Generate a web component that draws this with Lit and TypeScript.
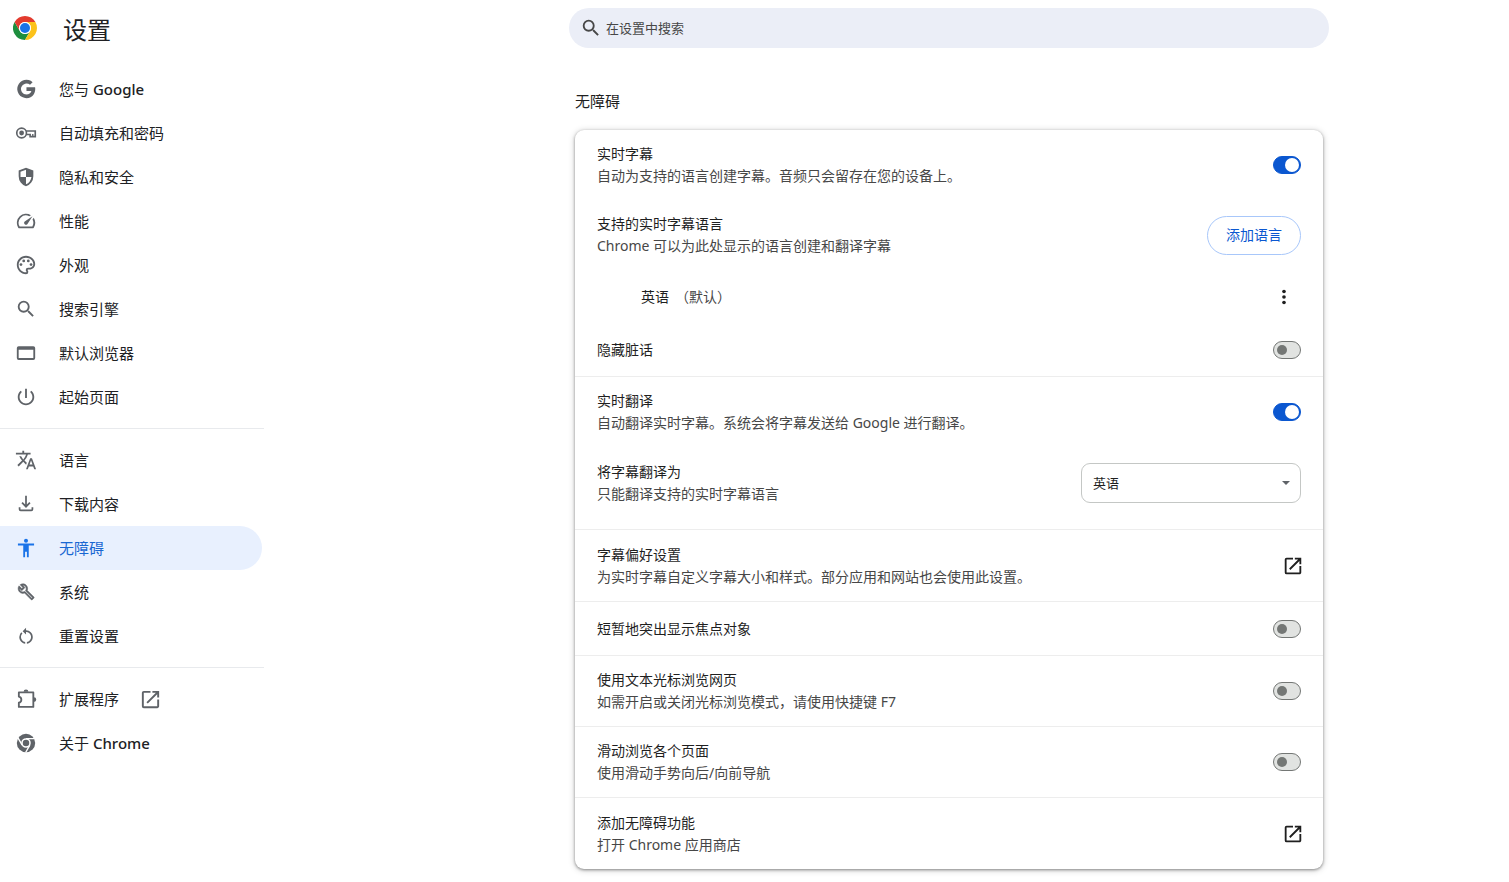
import { LitElement, html, css, svg, nothing } from "lit";
import { customElement, property } from "lit/decorators.js";

const ICONS: Record<string, unknown> = {
  google: svg`<path d="M12.5 10.2v3.9h5.4c-.7 2.3-2.6 3.9-5.4 3.9a6 6 0 1 1 3.9-10.6l2.8-2.8A10 10 0 1 0 12.5 22c8.4 0 10.2-7.8 9.4-11.8z"/>`,
  key: svg`<g fill="none" stroke="currentColor" stroke-width="1.8"><circle cx="7.2" cy="12" r="5.300"/><path d="M12.200 9.800h9.900v6.200h-5.600v-2.400h-4.300"/><path stroke-width="1.500" d="M19.400 16v-3"/></g><circle cx="7.2" cy="12" r="2.600"/>`,
  shield: svg`<path transform="scale(.025) translate(0 960)" d="M480-80q-139-35-229.500-159.500T160-516v-244l320-120 320 120v244q0 152-90.500 276.500T480-80Zm0-84q97-30 162-118.500T718-480H480v-315l-240 90v207q0 7 2 18h238v316Z"/>`,
  speed: svg`<path d="m20.380 8.570-1.230 1.850a8 8 0 0 1-.22 7.580H5.070A8 8 0 0 1 15.580 6.850l1.850-1.230A10 10 0 0 0 3.350 19a2 2 0 0 0 1.720 1h13.850a2 2 0 0 0 1.740-1 10 10 0 0 0-.27-10.440zm-9.790 6.840a2 2 0 0 0 2.830 0l5.660-8.490-8.490 5.660a2 2 0 0 0 0 2.830z"/>`,
  palette: svg`<path d="M12 22C6.490 22 2 17.510 2 12S6.490 2 12 2s10 4.040 10 9c0 3.310-2.690 6-6 6h-1.770c-.28 0-.5.22-.5.5 0 .12.050.23.13.33.41.47.64 1.060.64 1.670A2.500 2.500 0 0 1 12 22zm0-18c-4.410 0-8 3.590-8 8s3.590 8 8 8c.28 0 .5-.22.5-.5a.54.54 0 0 0-.14-.35c-.41-.46-.63-1.050-.63-1.650a2.500 2.500 0 0 1 2.500-2.500H16c2.210 0 4-1.790 4-4 0-3.860-3.590-7-8-7z"/><circle cx="6.5" cy="11.5" r="1.500"/><circle cx="9.5" cy="7.5" r="1.500"/><circle cx="14.5" cy="7.5" r="1.500"/><circle cx="17.5" cy="11.5" r="1.500"/>`,
  search: svg`<path d="M15.500 14h-.79l-.28-.27A6.471 6.471 0 0 0 16 9.500 6.500 6.500 0 1 0 9.500 16c1.610 0 3.090-.59 4.230-1.570l.27.28v.79l5 4.990L20.490 19l-4.990-5zm-6 0C7.010 14 5 11.990 5 9.500S7.010 5 9.500 5 14 7.010 14 9.500 11.990 14 9.500 14z"/>`,
  browser: svg`<path d="M20 4.500H4a2 2 0 0 0-2 2v11a2 2 0 0 0 2 2h16a2 2 0 0 0 2-2v-11a2 2 0 0 0-2-2zm0 13H4V8.500h16z"/>`,
  power: svg`<path d="M13 3h-2v10h2V3zm4.830 2.170l-1.420 1.420C17.990 7.860 19 9.810 19 12c0 3.870-3.130 7-7 7s-7-3.130-7-7c0-2.190 1.010-4.140 2.580-5.420L6.170 5.170C4.230 6.820 3 9.260 3 12c0 4.970 4.030 9 9 9s9-4.030 9-9c0-2.740-1.230-5.180-3.170-6.830z"/>`,
  translate: svg`<path d="M12.870 15.070l-2.540-2.510.03-.03A17.520 17.520 0 0 0 14.070 6H17V4h-7V2H8v2H1v1.990h11.170C11.500 7.920 10.440 9.750 9 11.350 8.070 10.320 7.300 9.190 6.690 8h-2c.73 1.630 1.730 3.170 2.980 4.560l-5.090 5.020L4 19l5-5 3.110 3.110.76-2.040zM18.500 10h-2L12 22h2l1.120-3h4.750L21 22h2l-4.500-12zm-2.620 7l1.620-4.330L19.120 17h-3.240z"/>`,
  download: svg`<g fill="none" stroke="currentColor" stroke-width="1.900"><path d="M12 3v12M7.700 10.600l4.300 4.300 4.300-4.300"/><path d="M5 15.500v2.300q0 1.200 1.200 1.200h11.600q1.200 0 1.200-1.200v-2.300"/></g>`,
  person: svg`<circle cx="12" cy="4" r="2.200"/><path d="M20.800 9.200H15V22h-2v-6h-2v6H9V9.200H3.200V7.200h17.600z"/>`,
  wrench: svg`<path transform="translate(2.600 2.300) scale(.8)" stroke="currentColor" stroke-width=".7" d="M22.610 18.990l-9.080-9.080c.93-2.340.45-5.100-1.440-7C9.790.61 6.210.4 3.660 2.260L7.500 6.110 6.080 7.520 2.250 3.690C.39 6.230.6 9.820 2.900 12.110c1.860 1.860 4.570 2.350 6.890 1.480l9.110 9.110c.39.39 1.020.39 1.410 0l2.300-2.300c.4-.38.4-1.010 0-1.410zm-3 1.600l-9.460-9.460c-.61.45-1.290.72-2 .82-1.360.2-2.790-.21-3.830-1.250C3.370 9.760 2.930 8.500 3 7.260l3.090 3.090 4.240-4.240-3.090-3.090c1.240-.07 2.490.37 3.440 1.310 1.080 1.080 1.490 2.570 1.240 3.960-.12.71-.42 1.370-.88 1.960l9.450 9.450-.88.89z"/>`,
  reset: svg`<path transform="translate(1 1.200) scale(.92)" d="M12 5V2L8 6l4 4V7c3.310 0 6 2.690 6 6 0 2.970-2.170 5.430-5 5.910v2.020c3.950-.49 7-3.850 7-7.930 0-4.420-3.580-8-8-8zm-6 8c0-1.650.67-3.150 1.760-4.240L6.340 7.340A8.014 8.014 0 0 0 4 13c0 4.080 3.050 7.440 7 7.930v-2.020c-2.830-.48-5-2.940-5-5.910z"/>`,
  puzzle: svg`<path fill="none" stroke="currentColor" stroke-width="2" stroke-linejoin="round" d="M4.200 4.800H20v15.800H4.200v-4.600a3.300 3.300 0 0 0 0-6.500z"/><path d="M9.400 4.200a2.600 2.600 0 0 1 5.200 0zM20.600 10a2.600 2.600 0 0 1 0 5.200z"/>`,
  launch: svg`<path d="M19 19H5V5h7V3H5a2 2 0 0 0-2 2v14a2 2 0 0 0 2 2h14c1.100 0 2-.9 2-2v-7h-2v7zM14 3v2h3.590l-9.830 9.830 1.410 1.410L19 6.410V10h2V3h-7z"/>`,
  chrome: svg`<g transform="translate(2 2) scale(.4167)"><circle cx="24" cy="24" r="24"/><path fill="none" stroke="#fff" stroke-width="3.600" d="M24 12.500H46M14 29.800L3 10.800M34 29.800L23 48.800"/><circle cx="24" cy="24" r="10.500" stroke="#fff" stroke-width="4"/></g>`,
  more: svg`<circle cx="12" cy="6" r="2"/><circle cx="12" cy="12" r="2"/><circle cx="12" cy="18" r="2"/>`,
};

const icon = (name: string, cls = "icon") =>
  html`<svg class=${cls} viewBox="0 0 24 24" fill="currentColor" aria-hidden="true">${ICONS[name]}</svg>`;

const shared = css`
  :host {
    font-family: "Noto Sans", "Noto Sans CJK SC", sans-serif;
  }
  *,
  *::before {
    box-sizing: border-box;
  }
  .icon {
    width: 22px;
    height: 22px;
    flex: none;
    display: block;
  }
`;

interface MenuItem {
  label: string;
  /** Latin product name that follows the label in a heavier weight. */
  product?: string;
  icon: string;
  active?: boolean;
  external?: boolean;
}

const MENU: MenuItem[][] = [
  [
    { label: "您与", product: "Google", icon: "google" },
    { label: "自动填充和密码", icon: "key" },
    { label: "隐私和安全", icon: "shield" },
    { label: "性能", icon: "speed" },
    { label: "外观", icon: "palette" },
    { label: "搜索引擎", icon: "search" },
    { label: "默认浏览器", icon: "browser" },
    { label: "起始页面", icon: "power" },
  ],
  [
    { label: "语言", icon: "translate" },
    { label: "下载内容", icon: "download" },
    { label: "无障碍", icon: "person", active: true },
    { label: "系统", icon: "wrench" },
    { label: "重置设置", icon: "reset" },
  ],
  [
    { label: "扩展程序", icon: "puzzle", external: true },
    { label: "关于", product: "Chrome", icon: "chrome" },
  ],
];

@customElement("settings-menu")
export class SettingsMenu extends LitElement {
  static styles = [
    shared,
    css`
      :host {
        display: block;
      }
      .brand {
        display: flex;
        align-items: flex-start;
        gap: 26px;
        padding: 14px 0 12px 13px;
      }
      .logo {
        width: 24px;
        height: 24px;
        flex: none;
        margin-top: 2px;
      }
      .name {
        margin: 0;
        font-size: 24px;
        line-height: 32px;
        font-weight: 400;
        color: #202124;
      }
      .menu {
        padding-top: 9px;
      }
      .group + .group {
        margin-top: 9px;
        padding-top: 9px;
        border-top: 1px solid #e8eaed;
      }
      .item {
        display: flex;
        align-items: center;
        height: 44px;
        margin-right: 2px;
        padding-left: 15px;
        border-radius: 0 22px 22px 0;
        font-size: 15px;
        line-height: 22px;
        color: #202124;
        text-decoration: none;
      }
      .item .icon {
        color: #5f6368;
      }
      .label {
        padding-left: 22px;
      }
      .product {
        font-weight: 500;
      }
      .item .external {
        width: 23px;
        height: 23px;
        margin-left: 20px;
        color: #5f6368;
      }
      .item.active {
        background: #e8f0fe;
        color: #1967d2;
      }
      .item.active .icon {
        color: #1a73e8;
      }
    `,
  ];

  render() {
    return html`
      <div class="brand">
        <svg class="logo" viewBox="0 0 48 48" aria-hidden="true">
          <circle cx="24" cy="24" r="13" fill="#fff" />
          <path fill="#1e8e3e" d="M3.220 36A24 24 0 0 0 24 48L34.390 30A12 12 0 0 1 13.610 30L3.220 12A24 24 0 0 0 3.220 36z" />
          <path fill="#fcc21b" d="M24 48A24 24 0 0 0 44.780 12H24A12 12 0 0 1 34.390 30z" />
          <path fill="#e33b2e" d="M24 12H44.780A24 24 0 0 0 3.220 12L13.610 30A12 12 0 0 1 24 12z" />
          <circle cx="24" cy="24" r="12" fill="#fff" />
          <circle cx="24" cy="24" r="10" fill="#1a73e8" />
        </svg>
        <h1 class="name">设置</h1>
      </div>
      <nav class="menu" aria-label="设置">
        ${MENU.map(
          (group) => html`<div class="group">
            ${group.map(
              (item) => html`<a class="item ${item.active ? "active" : ""}" href="#" aria-current=${item.active ? "page" : nothing}>
                ${icon(item.icon)}
                <span class="label">${item.label}${item.product ? html` <span class="product">${item.product}</span>` : nothing}</span>
                ${item.external ? icon("launch", "external") : nothing}
              </a>`
            )}
          </div>`
        )}
      </nav>
    `;
  }
}

interface Setting {
  id: string;
  title: string;
  sub?: string;
  control: "toggle" | "link" | "add" | "select";
  on?: boolean;
  divided?: boolean;
}

const CAPTIONS: Setting[] = [
  { id: "live-caption", title: "实时字幕", sub: "自动为支持的语言创建字幕。音频只会留存在您的设备上。", control: "toggle", on: true },
  { id: "languages", title: "支持的实时字幕语言", sub: "Chrome 可以为此处显示的语言创建和翻译字幕", control: "add" },
];

const OTHERS: Setting[] = [
  { id: "profanity", title: "隐藏脏话", control: "toggle" },
  { id: "live-translate", title: "实时翻译", sub: "自动翻译实时字幕。系统会将字幕发送给 Google 进行翻译。", control: "toggle", on: true, divided: true },
  { id: "target", title: "将字幕翻译为", sub: "只能翻译支持的实时字幕语言", control: "select" },
  { id: "preferences", title: "字幕偏好设置", sub: "为实时字幕自定义字幕大小和样式。部分应用和网站也会使用此设置。", control: "link", divided: true },
  { id: "focus", title: "短暂地突出显示焦点对象", control: "toggle", divided: true },
  { id: "caret", title: "使用文本光标浏览网页", sub: "如需开启或关闭光标浏览模式，请使用快捷键 F7", control: "toggle", divided: true },
  { id: "swipe", title: "滑动浏览各个页面", sub: "使用滑动手势向后/向前导航", control: "toggle", divided: true },
  { id: "store", title: "添加无障碍功能", sub: "打开 Chrome 应用商店", control: "link", divided: true },
];

@customElement("setting-row")
export class SettingRow extends LitElement {
  @property({ attribute: false }) setting!: Setting;

  static styles = [
    shared,
    css`
      :host {
        display: block;
      }
      .row {
        display: flex;
        align-items: center;
        gap: 24px;
        min-height: 70px;
        padding: 0 22px;
        font-size: 14px;
        line-height: 22px;
      }
      .divided {
        min-height: 71px;
        border-top: 1px solid #ededed;
      }
      .single {
        min-height: 53px;
      }
      .single.divided {
        min-height: 54px;
      }
      .link {
        min-height: 72px;
        padding-right: 19px;
      }
      .select {
        padding-bottom: 11px;
        min-height: 82px;
      }
      .text {
        flex: 1;
        min-width: 0;
      }
      .title {
        display: block;
        color: #1f1f1f;
      }
      .sub {
        display: block;
        color: #474747;
      }
      .toggle {
        appearance: none;
        display: flex;
        align-items: center;
        flex: none;
        width: 28px;
        height: 18px;
        margin: 0;
        padding: 0 3px;
        border: 1px solid #747775;
        border-radius: 9px;
        background: #e1e3e1;
      }
      .toggle::before {
        content: "";
        width: 10px;
        height: 10px;
        border-radius: 50%;
        background: #747775;
      }
      .toggle:checked {
        justify-content: flex-end;
        padding: 0 1px;
        border-color: #0b57d0;
        background: #0b57d0;
      }
      .toggle:checked::before {
        width: 14px;
        height: 14px;
        background: #fff;
      }
      .add {
        height: 39px;
        padding: 0 18px;
        border: 1px solid #a8c7fa;
        border-radius: 20px;
        background: #fff;
        color: #0b57d0;
        font: inherit;
      }
      .open {
        display: block;
        padding: 0;
        border: 0;
        background: none;
        color: #1f1f1f;
      }
      .picker {
        display: grid;
        align-items: center;
        width: 220px;
      }
      .picker > * {
        grid-area: 1 / 1;
      }
      .choice {
        appearance: none;
        width: 100%;
        height: 40px;
        padding: 0 11px;
        border: 1px solid #c4c7c5;
        border-radius: 9px;
        background: #fff;
        color: #1f1f1f;
        font-family: inherit;
        font-size: 13px;
      }
      .arrow {
        justify-self: end;
        width: 8px;
        height: 4px;
        margin-right: 11px;
        color: #5f6368;
        pointer-events: none;
      }
    `,
  ];

  private renderControl() {
    const s = this.setting;
    switch (s.control) {
      case "toggle":
        return html`<input class="toggle" id=${s.id} type="checkbox" role="switch" ?checked=${s.on} />`;
      case "link":
        return html`<button class="open" id=${s.id} type="button" aria-label=${s.title}>${icon("launch")}</button>`;
      case "add":
        return html`<button class="add" id=${s.id} type="button">添加语言</button>`;
      case "select":
        return html`<span class="picker">
          <select class="choice" id=${s.id}>
            <option>英语</option>
          </select>
          <svg class="arrow" viewBox="0 0 8 4" fill="currentColor" aria-hidden="true"><path d="M0 0h8L4 4z" /></svg>
        </span>`;
    }
  }

  private get rowClass() {
    const s = this.setting;
    const parts = ["row"];
    if (s.control === "link" || s.control === "select") parts.push(s.control);
    if (!s.sub) parts.push("single");
    if (s.divided) parts.push("divided");
    return parts.join(" ");
  }

  render() {
    const s = this.setting;
    return html`<div class=${this.rowClass}>
      <div class="text">
        ${s.control === "add"
          ? html`<span class="title">${s.title}</span>`
          : html`<label class="title" for=${s.id}>${s.title}</label>`}
        ${s.sub ? html`<span class="sub">${s.sub}</span>` : nothing}
      </div>
      ${this.renderControl()}
    </div>`;
  }
}

@customElement("app-root")
export class AppRoot extends LitElement {
  static styles = [
    shared,
    css`
      :host {
        display: flex;
        min-height: 100vh;
        background: #fff;
      }
      .side {
        flex: none;
        width: 264px;
      }
      .main {
        flex: 1;
        min-width: 0;
        padding: 8px 0 13px 125px;
      }
      .search {
        display: flex;
        align-items: center;
        gap: 4px;
        max-width: 760px;
        height: 40px;
        margin: 0 auto;
        padding: 0 11px;
        border-radius: 20px;
        background: #ebeef7;
        color: #474747;
      }
      .query {
        flex: 1;
        min-width: 0;
        padding: 0;
        border: 0;
        outline: 0;
        background: none;
        color: #1f1f1f;
        font-family: inherit;
        font-size: 13px;
      }
      .query::placeholder {
        color: #474747;
        opacity: 1;
      }
      .page {
        max-width: 748px;
        margin: 0 auto;
      }
      .heading {
        margin: 0;
        padding: 42px 0 18px;
        font-size: 15px;
        line-height: 22px;
        font-weight: 400;
        color: #1f1f1f;
      }
      .card {
        border-radius: 9px;
        background: #fff;
        box-shadow: 0 1px 3px rgba(0, 0, 0, 0.4), 0 1px 6px 1px rgba(0, 0, 0, 0.15);
      }
      .language {
        display: flex;
        align-items: center;
        gap: 6px;
        min-height: 53px;
        padding: 0 28px 0 66px;
        font-size: 14px;
        line-height: 22px;
        color: #1f1f1f;
      }
      .default {
        flex: 1;
        color: #474747;
      }
      .more {
        padding: 0;
        border: 0;
        background: none;
        color: #1f1f1f;
      }
    `,
  ];

  render() {
    return html`
      <settings-menu class="side"></settings-menu>
      <main class="main">
        <div class="search">
          ${icon("search")}
          <input class="query" type="search" aria-label="在设置中搜索" placeholder="在设置中搜索" />
        </div>
        <section class="page">
          <h2 class="heading">无障碍</h2>
          <div class="card">
            ${CAPTIONS.map((s) => html`<setting-row .setting=${s}></setting-row>`)}
            <div class="language">
              <span>英语</span><span class="default">（默认）</span>
              <button class="more" type="button" aria-label="更多操作">${icon("more")}</button>
            </div>
            ${OTHERS.map((s) => html`<setting-row .setting=${s}></setting-row>`)}
          </div>
        </section>
      </main>
    `;
  }
}
